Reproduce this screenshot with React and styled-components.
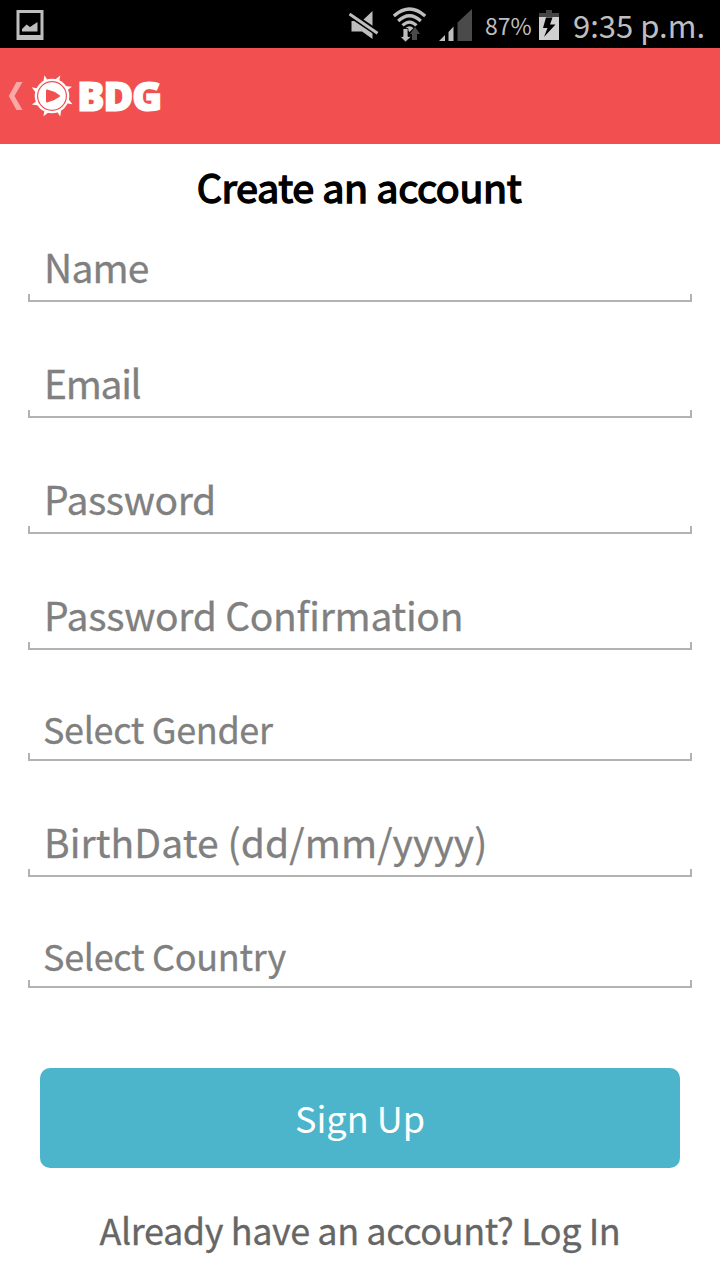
import React from "react";
import styled, { createGlobalStyle } from "styled-components";

const GlobalStyle = createGlobalStyle`
  *, *::before, *::after { box-sizing: border-box; }
  body { margin: 0; background: #fff; }
`;

const Screen = styled.div`
  display: flex;
  flex-direction: column;
  width: 720px;
  height: 1280px;
  overflow: hidden;
  background: #fff;
  font-family: "Noto Sans CJK JP", "Noto Sans", sans-serif;
  font-feature-settings: "liga" 1;
`;

const StatusBar = styled.header`
  display: flex;
  align-items: center;
  height: 48px;
  padding: 0 14px 0 16px;
  background: #000;
  color: #bebebe;
`;

const StatusIcon = styled.svg`
  display: block;
  flex: none;
  margin-left: ${(p) => p.$gap || 0}px;
`;

const Spacer = styled.div`
  flex: 1;
`;

const BatteryLevel = styled.span`
  margin: 1px 0 0 12px;
  width: 48px;
  font-size: 23px;
  line-height: 44px;
  white-space: nowrap;
`;

const Clock = styled.span`
  margin: 1px 0 0 14px;
  width: 133px;
  font-size: 31px;
  line-height: 43px;
  white-space: nowrap;
`;

const ActionBar = styled.nav`
  display: flex;
  align-items: center;
  height: 96px;
  padding-left: 8px;
  background: #f25050;
  color: #fff;
`;

const Emblem = styled.svg`
  display: block;
  margin-left: 6px;
`;

const Brand = styled.span`
  margin: -2px 0 0 3px;
  font-family: "Open Sans", sans-serif;
  font-weight: 800;
  font-size: 41px;
  line-height: 60px;
  letter-spacing: -1.3px;
  -webkit-text-stroke: 1.2px #fff;
`;

const Form = styled.form`
  display: flex;
  flex-direction: column;
  padding: 0 28px;
`;

const Title = styled.h1`
  display: flex;
  align-items: flex-end;
  justify-content: center;
  height: 82px;
  margin: 0;
  padding: 0 2px 10px 0;
  font-weight: 400;
  font-size: 39.5px;
  line-height: 60px;
  letter-spacing: -0.36px;
  color: #000;
  -webkit-text-stroke: 1.5px #000;
`;

const Fields = styled.div`
  display: flex;
  flex-direction: column;
  gap: 40px;
`;

const Field = styled.div`
  display: flex;
  flex-direction: column;
  justify-content: flex-end;
  height: ${(p) => (p.$select ? 71 : 76)}px;
`;

const Label = styled.label`
  padding-left: ${(p) => (p.$select ? 15 : 16)}px;
  font-size: ${(p) => (p.$select ? 36 : 39)}px;
  line-height: ${(p) => (p.$select ? 50 : 56)}px;
  letter-spacing: ${(p) => p.$tracking}px;
  white-space: nowrap;
  color: #808080;
  -webkit-text-stroke: 0.3px #808080;
`;

const Underline = styled.div`
  height: 8px;
  border: solid #b2b2b2;
  border-width: 0 2px 2px;
`;

const SubmitButton = styled.button`
  height: 100px;
  margin: 80px 12px 0;
  padding: 0 0 2px;
  border: 0;
  border-radius: 10px;
  background: #4cb5cb;
  color: #fff;
  font: 36px/48px "Noto Sans CJK JP", "Noto Sans", sans-serif;
`;

const LoginPrompt = styled.p`
  margin: 37px 0 0;
  text-align: center;
  font-size: 36px;
  line-height: 48px;
  letter-spacing: -0.42px;
  white-space: nowrap;
  color: #666;
  -webkit-text-stroke: 0.3px #666;
`;

const fields = [
  { label: "Name", tracking: -0.8 },
  { label: "Email", tracking: -1.3 },
  { label: "Password", tracking: -0.4 },
  { label: "Password Confirmation", tracking: -0.28 },
  { label: "Select Gender", tracking: -0.35, select: true },
  { label: "BirthDate (dd/mm/yyyy)", tracking: 0.1 },
  { label: "Select Country", tracking: -0.3, select: true },
];

const spikes = [20, 63, 110, 156, 201, 245, 291, 338];

function ScreenshotIcon() {
  return (
    <StatusIcon width="28" height="32" viewBox="0 0 28 32">
      <path fill="#bebebe" fillRule="evenodd" d="M0.5 2H27.5V32H0.5ZM3.5 5V27H24.5V5Z" />
      <path fill="#bebebe" d="M6 23.5V21L10.5 16.5L14 19L21.5 14V23.5Z" />
    </StatusIcon>
  );
}

function MuteIcon() {
  return (
    <StatusIcon width="30" height="30" viewBox="0 0 30 30">
      <path fill="#bebebe" d="M2.5 12H13L23.5 2V30L13 22.5H2.5Z" />
      <path stroke="#000" strokeWidth="6.5" d="M-2 3.2L32 26.3" />
      <path stroke="#bebebe" strokeWidth="3" d="M0.5 5L28.5 24.2" />
    </StatusIcon>
  );
}

function WifiIcon() {
  return (
    <StatusIcon $gap={14} width="34" height="36" viewBox="0 0 34 36">
      <g fill="none" stroke="#bebebe" strokeWidth="3.2">
        <path d="M0.8 10Q16.5 -4 32.2 10" />
        <path d="M5.2 15Q16.5 4.5 27.8 15" />
        <path d="M9.5 19.4Q16.5 12.8 23.5 19.4" />
      </g>
      <path fill="#bebebe" d="M12.5 22Q16.5 18.5 20.5 22L16.5 26Z" />
      <path fill="#bebebe" stroke="#000" strokeWidth="0.8" d="M10 22.5H15V30.5H18.5L12.5 36L7 30.5H10Z" />
      <path fill="#4a4a4a" d="M22 21L27 28H24V34H19V28H17Z" />
    </StatusIcon>
  );
}

function SignalIcon() {
  return (
    <StatusIcon $gap={12} width="34" height="34" viewBox="0 0 34 34">
      <path fill="#bebebe" d="M0 34L6 28V34ZM9.5 25L14.5 19.5V34H9.5Z" />
      <path fill="#4a4a4a" d="M18.5 15.5L33 2V34H18.5Z" />
    </StatusIcon>
  );
}

function BatteryIcon() {
  return (
    <StatusIcon $gap={6} width="20" height="31" viewBox="0 0 20 31">
      <path fill="#444" d="M7 1H13V4H20V8H0V4H7Z" />
      <path fill="#d0d0d0" d="M0 8H20V31H0Z" />
      <path fill="#000" d="M7 8.5H13.5L11 15.5H16.5L5 28L8.5 19H4Z" />
    </StatusIcon>
  );
}

function BackChevron() {
  return (
    <svg width="16" height="28" viewBox="0 0 16 28">
      <path fill="#fff" fillOpacity="0.5" d="M8.5 0H14.5L6.5 14L14.5 28H8.5L0.8 14Z" />
    </svg>
  );
}

function WheelEmblem() {
  return (
    <Emblem width="44" height="44" viewBox="-22 -22 44 44">
      {spikes.map((angle) => (
        <path key={angle} fill="#fff" d="M-3 -16L0.8 -22L1.8 -16Z" transform={`rotate(${angle})`} />
      ))}
      <circle r="17.3" fill="#fff" />
      <circle r="14.4" fill="none" stroke="#f25050" strokeWidth="1.2" />
      <path fill="#f25050" stroke="#f25050" strokeWidth="2" strokeLinejoin="round" d="M-5 -5.5Q2 -4 7 0Q2 4 -5 5.5Z" />
    </Emblem>
  );
}

export default function App() {
  return (
    <Screen>
      <GlobalStyle />
      <StatusBar>
        <ScreenshotIcon />
        <Spacer />
        <MuteIcon />
        <WifiIcon />
        <SignalIcon />
        <BatteryLevel>87%</BatteryLevel>
        <BatteryIcon />
        <Clock>9:35 p.m.</Clock>
      </StatusBar>
      <ActionBar>
        <BackChevron />
        <WheelEmblem />
        <Brand>BDG</Brand>
      </ActionBar>
      <Form>
        <Title>Create an account</Title>
        <Fields>
          {fields.map(({ label, tracking, select }) => (
            <Field key={label} $select={select}>
              <Label $select={select} $tracking={tracking}>{label}</Label>
              <Underline />
            </Field>
          ))}
        </Fields>
        <SubmitButton type="button">Sign Up</SubmitButton>
        <LoginPrompt>Already have an account? Log In</LoginPrompt>
      </Form>
    </Screen>
  );
}
